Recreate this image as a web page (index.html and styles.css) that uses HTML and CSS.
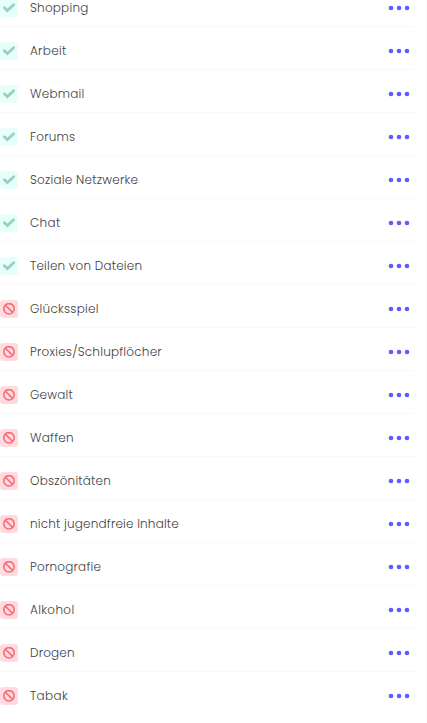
FILE: index.html
```
<!DOCTYPE html>
<html lang="de">
<head>
<meta charset="utf-8">
<title>Kategorien</title>
<link rel="stylesheet" href="styles.css">
</head>
<body>
<svg class="defs">
  <symbol id="check" viewBox="0 0 12 12"><path d="M1.400 5.700 4.400 8.500 10.700 2.700" fill="none" stroke="#99cfc3" stroke-width="2.800" stroke-linecap="round"/></symbol>
  <symbol id="ban" viewBox="0 0 12 12"><circle cx="6" cy="5.800" r="5.200"/><path d="M2.400 2.200 9.600 9.400"/></symbol>
  <symbol id="dots" viewBox="0 0 22 6"><circle cx="3" cy="3" r="2.350"/><circle cx="11" cy="3" r="2.350"/><circle cx="19" cy="3" r="2.350"/></symbol>
</svg>
<main class="panel"><ul class="list" id="list"></ul></main>
<script src="app.js"></script>
</body>
</html>
```
FILE: styles.css
```
* { box-sizing: border-box; }
body {
  margin: 0;
  height: 723px;
  overflow: hidden;
  background: #fff;
  color: #424242;
  font: 300 12px/18px Poppins, Inter, sans-serif;
}
.defs { display: none; }
.panel {
  width: 427px;
  height: 723px;
  overflow: hidden;
  border-right: 1px solid #f8f8fc;
}
.list {
  list-style: none;
  width: 414px;
  margin: -16px 0 0;
  padding: 0;
}
.row {
  display: flex;
  align-items: center;
  height: 43px;
  padding: 15px 4px 9px 0;
  border-bottom: 1px solid #f8f8fb;
}
.row:last-child { border-bottom-color: transparent; }
.badge {
  display: flex;
  align-items: center;
  justify-content: center;
  width: 18px;
  height: 18px;
  margin-right: 12px;
  border-radius: 3px;
}
.badge svg { width: 12px; height: 12px; overflow: visible; }
.allowed { background: #e6fff8; }
.blocked { background: #ffdade; fill: none; stroke: #fa6a76; stroke-width: 1.600; }
.label { white-space: nowrap; }
.more { width: 22px; height: 6px; margin-left: auto; fill: #605dff; }
```
FILE: app.js
```
// Label, width of the label in pixels, blocked flag
const categories = [
  ["Shopping", 58.5, 0], ["Arbeit", 36.5, 0], ["Webmail", 54.5, 0], ["Forums", 45.5, 0],
  ["Soziale Netzwerke", 108.2, 0], ["Chat", 30.5, 0], ["Teilen von Dateien", 112.2, 0],
  ["Glücksspiel", 68.7, 1], ["Proxies/Schlupflöcher", 131.9, 1], ["Gewalt", 43, 1],
  ["Waffen", 43.8, 1], ["Obszönitäten", 81, 1], ["nicht jugendfreie Inhalte", 149, 1],
  ["Pornografie", 71.2, 1], ["Alkohol", 44.5, 1], ["Drogen", 44.7, 1], ["Tabak", 38, 1]
];
const list = document.getElementById("list");
for (const [name, width, blocked] of categories) {
  const row = document.createElement("li");
  row.className = "row";
  row.innerHTML = `<span class="badge ${blocked ? "blocked" : "allowed"}"><svg><use href="#${blocked ? "ban" : "check"}"/></svg></span><span class="label">${name}</span><svg class="more"><use href="#dots"/></svg>`;
  list.append(row);
  const label = row.querySelector(".label");
  const spacing = (width - label.getBoundingClientRect().width) / name.length;
  label.style.letterSpacing = `${spacing}px`;
}
```
